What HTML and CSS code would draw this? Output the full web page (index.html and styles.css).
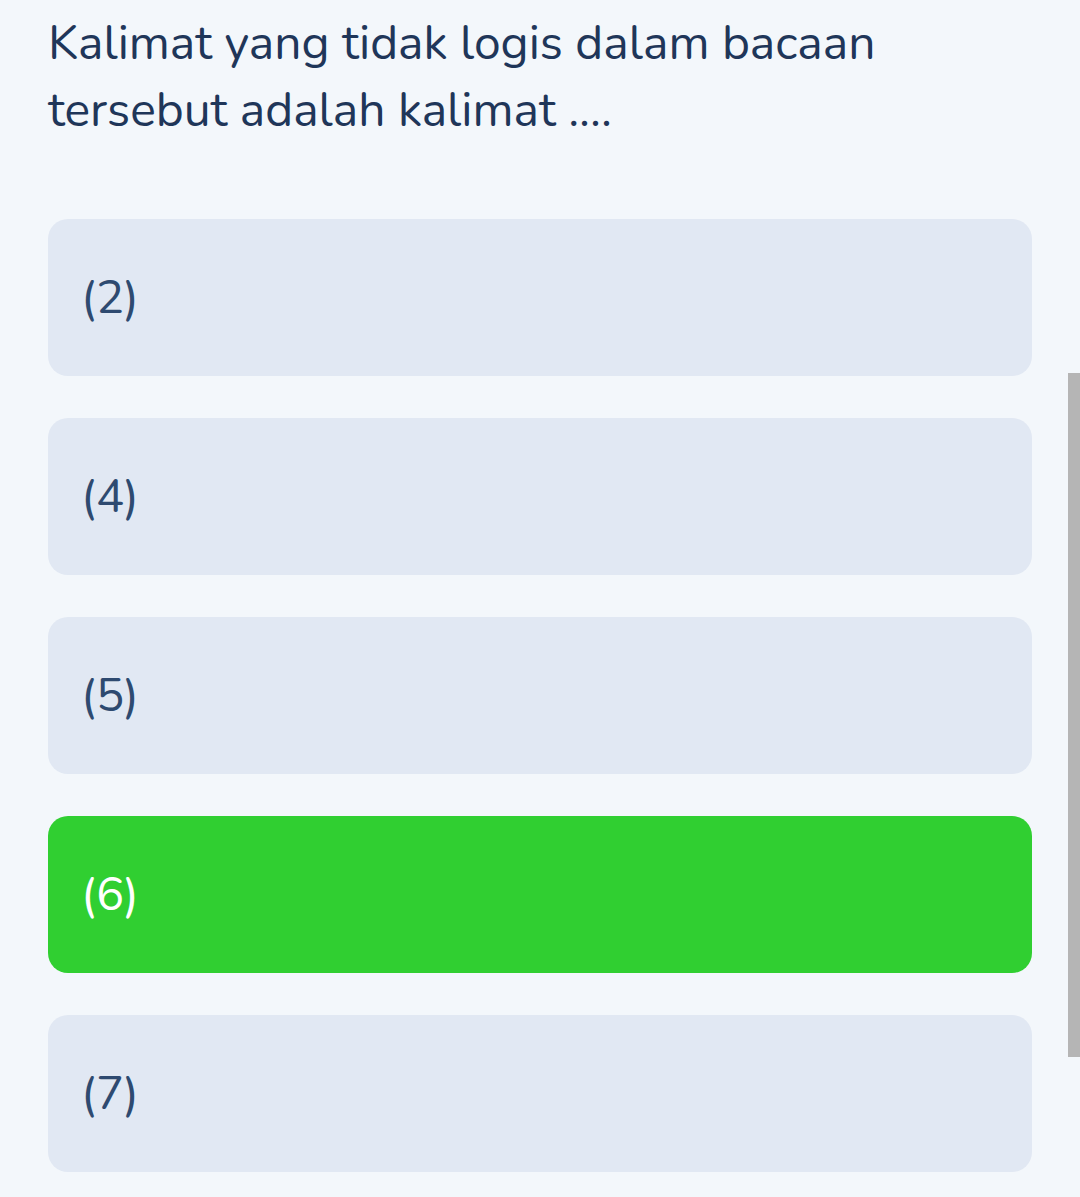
FILE: index.html
```html
<!DOCTYPE html>
<html lang="id">
<head>
<meta charset="utf-8">
<title>Soal</title>
<link rel="stylesheet" href="styles.css">
</head>
<body>
<main class="page">
  <h1 class="question">Kalimat yang tidak logis dalam bacaan tersebut adalah kalimat ....</h1>
  <div class="options">
    <div class="option">(2)</div>
    <div class="option">(4)</div>
    <div class="option">(5)</div>
    <div class="option option-correct">(6)</div>
    <div class="option">(7)</div>
  </div>
</main>
<div class="scrollbar"></div>
</body>
</html>
```
FILE: styles.css
```css
html, body {
  margin: 0;
  padding: 0;
  background: #f3f7fb;
}
body {
  width: 1080px;
  height: 1197px;
  overflow: hidden;
  position: relative;
  font-family: "Nunito", "Noto Sans", "Open Sans", sans-serif;
}
.page {
  padding: 10px 48px 0 48px;
}
.question {
  margin: 0;
  font-size: 48px;
  line-height: 67px;
  font-weight: 400;
  color: #1f3659;
  width: 880px;
  height: 134px;
}
.options {
  margin-top: 75px;
  display: flex;
  flex-direction: column;
  gap: 42px;
}
.option {
  height: 157px;
  border-radius: 20px;
  background: #e1e8f3;
  display: flex;
  align-items: center;
  padding-left: 33px;
  font-size: 47px;
  color: #2e4a70;
  box-sizing: border-box;
}
.option-correct {
  background: #30cf31;
  color: #ffffff;
}
.scrollbar {
  position: absolute;
  left: 1068px;
  top: 373px;
  width: 12px;
  height: 684px;
  background: #b5b5b5;
}
```
